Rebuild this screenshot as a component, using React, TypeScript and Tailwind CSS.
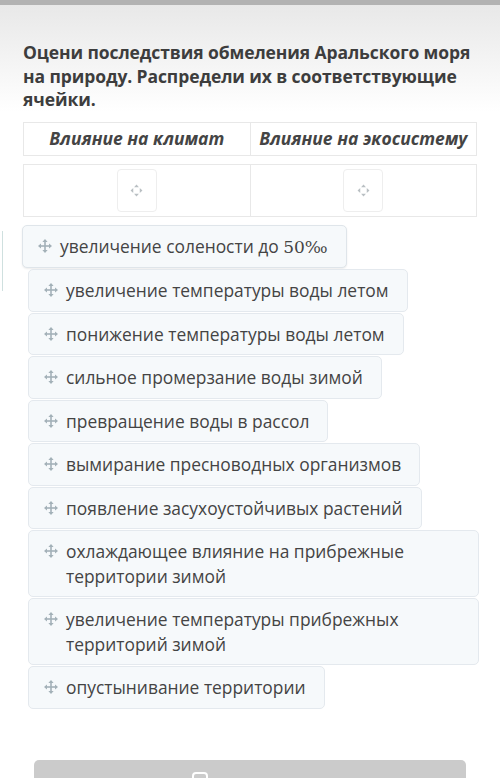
const items = [
  "увеличение температуры воды летом",
  "понижение температуры воды летом",
  "сильное промерзание воды зимой",
  "превращение воды в рассол",
  "вымирание пресноводных организмов",
  "появление засухоустойчивых растений",
  "охлаждающее влияние на прибрежные территории зимой",
  "увеличение температуры прибрежных территорий зимой",
  "опустынивание территории",
];

function MoveIcon() {
  return (
    <svg width="14" height="14" viewBox="0 0 14 14" className="shrink-0 mt-[5px]">
      <g fill="#a3b1b8">
        <rect x="6.2" y="2.5" width="1.6" height="9" />
        <rect x="2.5" y="6.2" width="9" height="1.6" />
        <polygon points="7,0 9.6,3 4.4,3" />
        <polygon points="7,14 9.6,11 4.4,11" />
        <polygon points="0,7 3,4.4 3,9.6" />
        <polygon points="14,7 11,4.4 11,9.6" />
      </g>
    </svg>
  );
}

function DropIcon() {
  return (
    <svg width="13" height="13" viewBox="0 0 12 12">
      <g fill="#b9bfc3">
        <polygon points="6,0.5 8.2,3 3.8,3" />
        <polygon points="6,11.5 8.2,9 3.8,9" />
        <polygon points="0.5,6 3,3.8 3,8.2" />
        <polygon points="11.5,6 9,3.8 9,8.2" />
      </g>
    </svg>
  );
}

function DropCell({ right }: { right?: boolean }) {
  return (
    <div className={`flex-1 flex items-center justify-center py-[5px] ${right ? "" : "border-r border-[#e8e8e8]"}`}>
      <div className="w-[40px] h-[43px] border border-[#eeeeee] rounded-[4px] bg-white flex items-center justify-center">
        <DropIcon />
      </div>
    </div>
  );
}

export default function App() {
  return (
    <div
      className="w-[500px] h-[778px] overflow-hidden bg-white text-[#3f3f3f]"
      style={{ fontFamily: '"Open Sans", "Noto Sans", sans-serif' }}
    >
      <div className="h-[5px] bg-[#b2b2b2]" />
      <div className="bg-gradient-to-b from-[#e8e8e8] to-white pt-[36px] px-[23px]">
        <h1 className="text-[17.5px] leading-[23.5px] font-bold text-[#3d3d3d] tracking-[-0.1px]">
          Оцени последствия обмеления Аральского моря на природу. Распредели их в соответствующие ячейки.
        </h1>
      </div>

      <div className="mx-[23px] mt-[10px]">
        <div className="flex border border-[#e8e8e8] h-[34px]">
          <div className="flex-1 flex items-center justify-center border-r border-[#e8e8e8] text-[17.5px] font-bold italic text-[#444]">
            Влияние на климат
          </div>
          <div className="flex-1 flex items-center justify-center text-[17.5px] font-bold italic text-[#444]">
            Влияние на экосистему
          </div>
        </div>
        <div className="flex border border-[#e8e8e8] mt-[8px] h-[53px]">
          <DropCell />
          <DropCell right />
        </div>
      </div>

      <div className="relative flex flex-col items-start mt-[8px] ml-[28px] w-[451px]">
        <div className="-ml-[6px] flex gap-[8px] items-start pl-[15px] pr-[18px] py-[8px] bg-[#f6f9fb] border border-[#dfe5ea] rounded-[5px] shadow-[0_1px_2px_rgba(0,0,0,0.08)] text-[17.4px] leading-[24.5px] text-[#444]">
          <MoveIcon />
          <span>
            увеличение солености до{" "}
            <span style={{ fontFamily: '"DejaVu Serif", "Liberation Serif", serif' }} className="text-[17px]">
              50‰
            </span>
          </span>
        </div>
        {items.map((t) => (
          <div
            key={t}
            className="mt-[1px] flex gap-[8px] items-start pl-[15px] pr-[18px] py-[8px] bg-[#f6f9fb] border border-[#e4e9ee] rounded-[5px] text-[17.4px] leading-[24.5px] text-[#444]"
          >
            <MoveIcon />
            <span>{t}</span>
          </div>
        ))}
        <div className="absolute -left-[28px] top-[6px] w-[3px] h-[60px] border-r border-[#cfe0df]" />
      </div>

      <div className="mx-[34px] mt-[51px] h-[30px] bg-[#cbcbcb] rounded-[5px] flex justify-center">
        <div className="mt-[12px] ml-[-100px] w-[16px] h-[14px] rounded-[4px] border-2 border-white" />
      </div>
    </div>
  );
}
